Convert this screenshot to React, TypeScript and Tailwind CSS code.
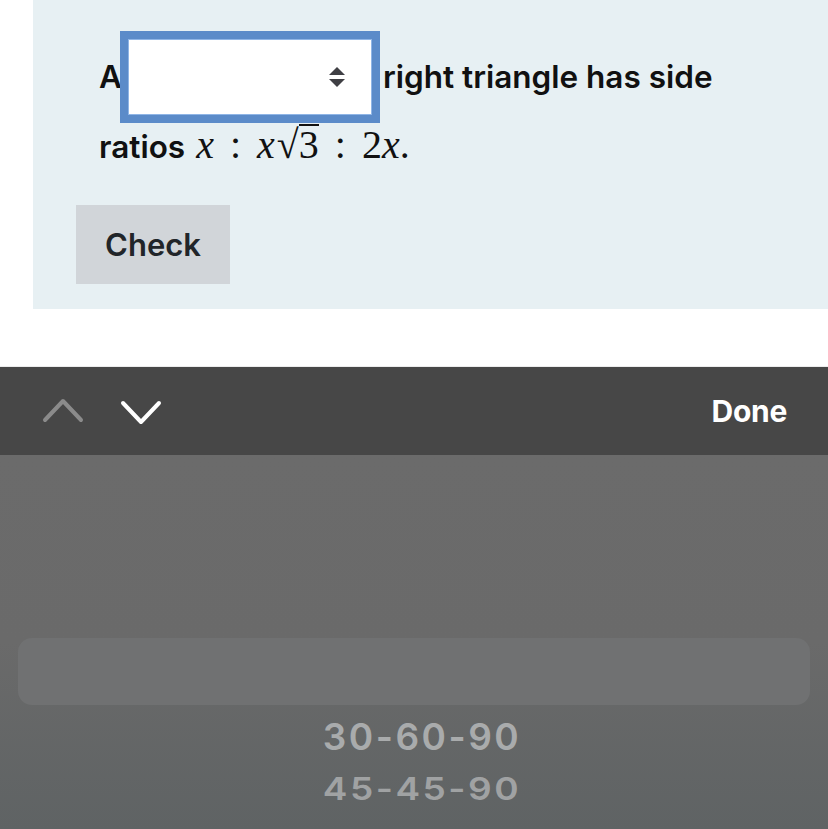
import React from "react";

const sans = { fontFamily: "Inter, 'Noto Sans', sans-serif" };

export default function App() {
  return (
    <div className="w-[828px] h-[829px] bg-white flex flex-col overflow-hidden" style={sans}>
      <div className="h-[309px] pl-[33px] shrink-0">
        <div className="h-full bg-[#e7f0f3] pl-[66px] pt-[31px] text-[31.5px] font-semibold text-[#111] leading-[36px]">
          <div className="flex items-center h-[92px]">
            <span>A</span>
            <div className="-ml-[2px] w-[260px] h-[92px] border-[8px] border-[#5b8bc9] bg-white flex items-center justify-end pr-[26px] shadow-[inset_0_0_0_1px_#8fb5e6]">
              <svg width="18" height="24" viewBox="0 0 18 24">
                <path d="M9 2 L17 10 L1 10 Z" fill="#3f3f44" />
                <path d="M9 22 L17 14 L1 14 Z" fill="#3f3f44" />
              </svg>
            </div>
            <span className="ml-[3px]">right triangle has side</span>
          </div>
          <div className="flex items-baseline mt-[1px]">
            <span>ratios</span>
            <span className="ml-[11px] text-[40px] font-normal leading-[36px]" style={{ fontFamily: "'Liberation Serif', serif" }}>
              <i>x</i>
              <span className="mx-[16px]">:</span>
              <i>x</i>
              <span className="inline-flex items-baseline">
                <span className="ml-[2px]">√</span>
                <span className="border-t-[2px] border-[#111] leading-[38px]">3</span>
              </span>
              <span className="mx-[16px]">:</span>
              <span>2</span>
              <i>x</i>
              <span>.</span>
            </span>
          </div>
          <div className="mt-[40px] -ml-[23px] w-[154px] h-[79px] bg-[#d1d5d9] flex items-center justify-center text-[#212529] font-semibold text-[31px]">
            Check
          </div>
        </div>
      </div>
      <div className="h-[58px] shrink-0 bg-white border-b border-[#ececec]" />
      <div className="h-[88px] shrink-0 bg-[#474747] flex items-center pl-[42px] pr-[41px]">
        <svg width="42" height="26" viewBox="0 0 42 26">
          <path d="M3 22 L21 3 L39 22" fill="none" stroke="#8b8b8b" strokeWidth="4" strokeLinecap="round" strokeLinejoin="round" />
        </svg>
        <svg width="42" height="26" viewBox="0 0 42 26" className="ml-[36px] mt-[2px]">
          <path d="M3 4 L21 23 L39 4" fill="none" stroke="#ffffff" strokeWidth="4" strokeLinecap="round" strokeLinejoin="round" />
        </svg>
        <span className="ml-auto text-white font-bold text-[30px] tracking-[-0.3px]">Done</span>
      </div>
      <div className="flex-1 bg-gradient-to-b from-[#6b6b6b] via-[#6a6a6a] to-[#5f6364] flex flex-col items-center pt-[183px]">
        <div className="w-[792px] h-[67px] rounded-[14px] bg-[#707172]" />
        <div className="ml-[16px] mt-[10px] text-[37px] font-semibold text-[#a9abac] tracking-[2.5px] leading-[44px]">30-60-90</div>
        <div className="ml-[16px] mt-[10px] text-[37px] font-semibold text-[#a0a2a3] tracking-[2.5px] leading-[40px] scale-y-[0.86]">45-45-90</div>
      </div>
    </div>
  );
}
